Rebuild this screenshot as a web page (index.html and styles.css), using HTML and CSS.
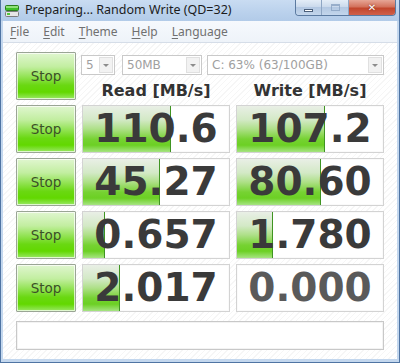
FILE: index.html
```
<!DOCTYPE html>
<html lang="en">

<head>
    <meta charset="UTF-8">
    <title>CrystalDiskMark</title>
    <link rel="stylesheet" href="styles.css">
</head>

<body>
    <div class="window">
        <div class="titlebar">
            <svg class="app-icon" width="16" height="16" viewBox="0 0 16 16">
                <rect x="1.5" y="2.5" width="13" height="5" rx="1" fill="#3fbf2a" stroke="#2a7d1c" />
                <rect x="2" y="3" width="12" height="2" fill="#8fe07a" />
                <rect x="1.5" y="8.5" width="13" height="5" rx="1" fill="#e6e6e6" stroke="#7d7d7d" />
                <rect x="3" y="10" width="3" height="2" fill="#4fc83a" />
            </svg>
            <span class="title">Preparing... Random Write (QD=32)</span>
            <div class="caption-buttons">
                <span class="cap-btn cap-min"><i></i></span>
                <span class="cap-btn cap-max"><i></i></span>
                <span class="cap-btn cap-close">&#x2715;</span>
            </div>
        </div>

        <div class="client">
            <nav class="menubar">
                <span><u>F</u>ile</span>
                <span><u>E</u>dit</span>
                <span><u>T</u>heme</span>
                <span><u>H</u>elp</span>
                <span><u>L</u>anguage</span>
            </nav>

            <div class="bench">
                <button class="stop-btn">Stop</button>
                <div class="controls">
                    <div class="selects">
                        <div class="combo combo-count">5<span class="arrow"></span></div>
                        <div class="combo combo-size">50MB<span class="arrow"></span></div>
                        <div class="combo combo-drive">C: 63% (63/100GB)<span class="arrow"></span></div>
                    </div>
                    <div class="headers">
                        <h2>Read [MB/s]</h2>
                        <h2>Write [MB/s]</h2>
                    </div>
                </div>

                <button class="stop-btn">Stop</button>
                <div class="score"><div class="meter" style="width: 88px"></div><span>110.6</span></div>
                <div class="score"><div class="meter" style="width: 88px"></div><span>107.2</span></div>

                <button class="stop-btn">Stop</button>
                <div class="score"><div class="meter" style="width: 77px"></div><span>45.27</span></div>
                <div class="score"><div class="meter" style="width: 84px"></div><span>80.60</span></div>

                <button class="stop-btn">Stop</button>
                <div class="score"><div class="meter" style="width: 22px"></div><span>0.657</span></div>
                <div class="score"><div class="meter" style="width: 36px"></div><span>1.780</span></div>

                <button class="stop-btn">Stop</button>
                <div class="score"><div class="meter" style="width: 37px"></div><span>2.017</span></div>
                <div class="score score-idle"><span>0.000</span></div>
            </div>

            <div class="status"></div>
        </div>
    </div>
</body>

</html>
```

FILE: styles.css
```
* {
    margin: 0;
    padding: 0;
    box-sizing: border-box;
}

body {
    background: #ffffff;
}

.window {
    width: 400px;
    height: 363px;
    display: flex;
    flex-direction: column;
    background: #c3d7ee;
    border: 1px solid #4f74a3;
    border-top: none;
    padding: 0 2px 3px;
}

/* title bar */

.titlebar {
    height: 21px;
    display: flex;
    align-items: flex-start;
    margin: 0 -2px;
    padding: 0 3px 0 3px;
    background: linear-gradient(to bottom, #c9dcf2 0%, #bad1ec 60%, #b2cbe8 100%);
}

.app-icon {
    margin-top: 3px;
    flex-shrink: 0;
}

.title {
    margin-left: 5px;
    margin-top: 2px;
    font-family: 'Noto Sans', sans-serif;
    font-size: 12.5px;
    line-height: 16px;
    color: #1c1c1c;
}

.caption-buttons {
    margin-left: auto;
    display: flex;
    height: 16px;
    border: 1px solid #5b7aa0;
    border-top: none;
    border-radius: 0 0 4px 4px;
    overflow: hidden;
}

.cap-btn {
    display: flex;
    align-items: center;
    justify-content: center;
    height: 100%;
    background: linear-gradient(to bottom, #e4edf7 0%, #cbdaec 45%, #b3c8e2 50%, #c3d6ec 100%);
    border-right: 1px solid #8ea6c4;
}

.cap-min {
    width: 26px;
}

.cap-min i {
    display: block;
    width: 9px;
    height: 3px;
    margin-top: 5px;
    background: #ffffff;
    border: 1px solid #4b5f7a;
}

.cap-max {
    width: 27px;
}

.cap-max i {
    display: block;
    width: 9px;
    height: 7px;
    border: 1px solid #8aa3c2;
    border-top-width: 2px;
    opacity: 0.8;
}

.cap-close {
    width: 46px;
    border-right: none;
    background: linear-gradient(to bottom, #e6a696 0%, #d3725c 45%, #c2462c 55%, #d0604a 100%);
    color: #ffffff;
    font-family: 'DejaVu Sans', sans-serif;
    font-weight: bold;
    font-size: 10px;
    text-shadow: 0 0 2px #6b1c0c;
}

/* client area */

.client {
    flex: 1;
    display: flex;
    flex-direction: column;
    background: repeating-linear-gradient(135deg, #ffffff 0 3px, #f6f6f6 3px 4px);
    padding: 0 13px 8px;
}

.menubar {
    height: 22px;
    margin: 0 -13px;
    padding: 0 0 0 5px;
    display: flex;
    align-items: center;
    gap: 10px;
    background: linear-gradient(to bottom, #f6f9fd, #eef3f9);
    border-bottom: 1px solid #d5dde8;
    font-family: 'Noto Sans', sans-serif;
    font-size: 12px;
    color: #707070;
}

.menubar span {
    padding: 0 2px;
}

.menubar u {
    text-underline-offset: 2px;
}

/* benchmark grid */

.bench {
    margin-top: 9px;
    display: grid;
    grid-template-columns: 60px 148px 148px;
    grid-auto-rows: 48px;
    column-gap: 6px;
    row-gap: 5px;
}

.stop-btn {
    border: 1px solid #9aa595;
    border-radius: 1px;
    box-shadow: inset 0 0 0 1px rgba(255, 255, 255, 0.7);
    background: linear-gradient(to bottom, #e0f6d0 0%, #c2eea0 30%, #96e45a 50%, #6ad812 70%, #62d800 85%, #9ae866 100%);
    font-family: 'DejaVu Sans', sans-serif;
    font-size: 13.5px;
    color: #3c5128;
}

.controls {
    grid-column: 2 / 4;
    display: flex;
    flex-direction: column;
}

.selects {
    display: flex;
    margin: 3px 0 0 -1px;
    height: 20px;
}

.combo {
    position: relative;
    height: 20px;
    padding: 0 0 0 4px;
    border: 1px solid #c9c9c9;
    background: #ffffff;
    font-family: 'DejaVu Sans', sans-serif;
    font-size: 12px;
    line-height: 18px;
    color: #a0a0a0;
}

.combo-count {
    width: 34px;
}

.combo-size {
    width: 80px;
    margin-left: 7px;
}

.combo-drive {
    width: 177px;
    margin-left: 5px;
}

.arrow {
    position: absolute;
    top: 1px;
    right: 1px;
    bottom: 1px;
    width: 14px;
    background: #f2f2f2;
    border: 1px solid #e0e0e0;
}

.arrow::after {
    content: '';
    position: absolute;
    left: 3px;
    top: 6px;
    border-left: 3px solid transparent;
    border-right: 3px solid transparent;
    border-top: 3px solid #8c8c8c;
}

.headers {
    display: grid;
    grid-template-columns: 148px 148px;
    column-gap: 6px;
    margin-top: 6px;
}

.headers h2 {
    text-align: center;
    font-family: 'DejaVu Sans', sans-serif;
    font-size: 16px;
    line-height: 20px;
    font-weight: bold;
    color: #333333;
}

.score {
    position: relative;
    border: 1px solid #d3d3d3;
    background: #ffffff;
    box-shadow: inset 0 0 0 1px #fafafa;
    text-align: center;
    font-family: 'DejaVu Sans', sans-serif;
    font-weight: bold;
    font-size: 39px;
    line-height: 46px;
    color: #3a3a3a;
}

.score span {
    position: relative;
}

.score-idle {
    color: #5a5a5a;
}

.meter {
    position: absolute;
    left: 0;
    top: 0;
    bottom: 0;
    border-right: 1px solid #3f9422;
    background: linear-gradient(to bottom, #e9efe6 0%, #d3e9c6 30%, #aee088 50%, #76d232 72%, #6cd024 85%, #a6e482 100%);
}

.status {
    margin-top: 9px;
    height: 29px;
    border: 1px solid #c8c8c8;
    background: #ffffff;
    box-shadow: inset 0 0 0 1px #f3f3f3;
}
```
